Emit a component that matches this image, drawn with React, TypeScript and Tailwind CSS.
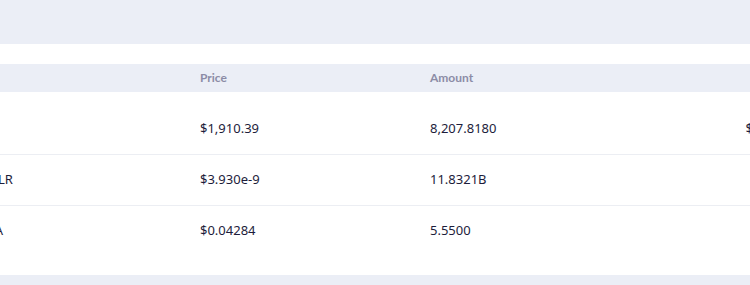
import React from "react";

type Row = {
  name: string;
  price: string;
  amount: string;
  value: string;
};

const rows: Row[] = [
  { name: "OP", price: "$1,910.39", amount: "8,207.8180", value: "$15.68M" },
  { name: "NOLR", price: "$3.930e-9", amount: "11.8321B", value: "$46.50" },
  { name: "USA", price: "$0.04284", amount: "5.5500", value: "$0.24" },
];

export default function App() {
  return (
    <div
      className="w-[750px] h-[285px] overflow-hidden bg-white text-[#1d1d3b]"
      style={{ fontFamily: "'Noto Sans', 'Open Sans', sans-serif" }}
    >
      {/* top band */}
      <div className="h-[44px] bg-[#ebeef6]" />

      <div className="mt-[20px] overflow-hidden">
        <div className="w-[850px] -ml-[22px]">
          {/* header */}
          <div
            className="flex items-center h-[28px] bg-[#ebeef6] text-[12px] font-bold text-[#8c8ca6]"
            style={{ fontFamily: "Lato, sans-serif" }}
          >
            <div className="w-[222px]" />
            <div className="w-[230px]">Price</div>
            <div className="w-[200px]">Amount</div>
            <div className="w-[168px] text-right">Value</div>
          </div>

          <div className="pt-[12px] pb-[19px]">
            {rows.map((row, i) => (
              <div
                key={row.name}
                className={`flex items-center h-[50px] text-[13px] box-content ${
                  i < rows.length - 1 ? "border-b border-[#eceef3]" : ""
                }`}
              >
                <div className="w-[222px]">{row.name}</div>
                <div className="w-[230px]">{row.price}</div>
                <div className="w-[200px]">{row.amount}</div>
                <div className="w-[168px] text-right">{row.value}</div>
              </div>
            ))}
          </div>
        </div>
      </div>

      {/* bottom band */}
      <div className="h-[10px] bg-[#ebeef6]" />
    </div>
  );
}
